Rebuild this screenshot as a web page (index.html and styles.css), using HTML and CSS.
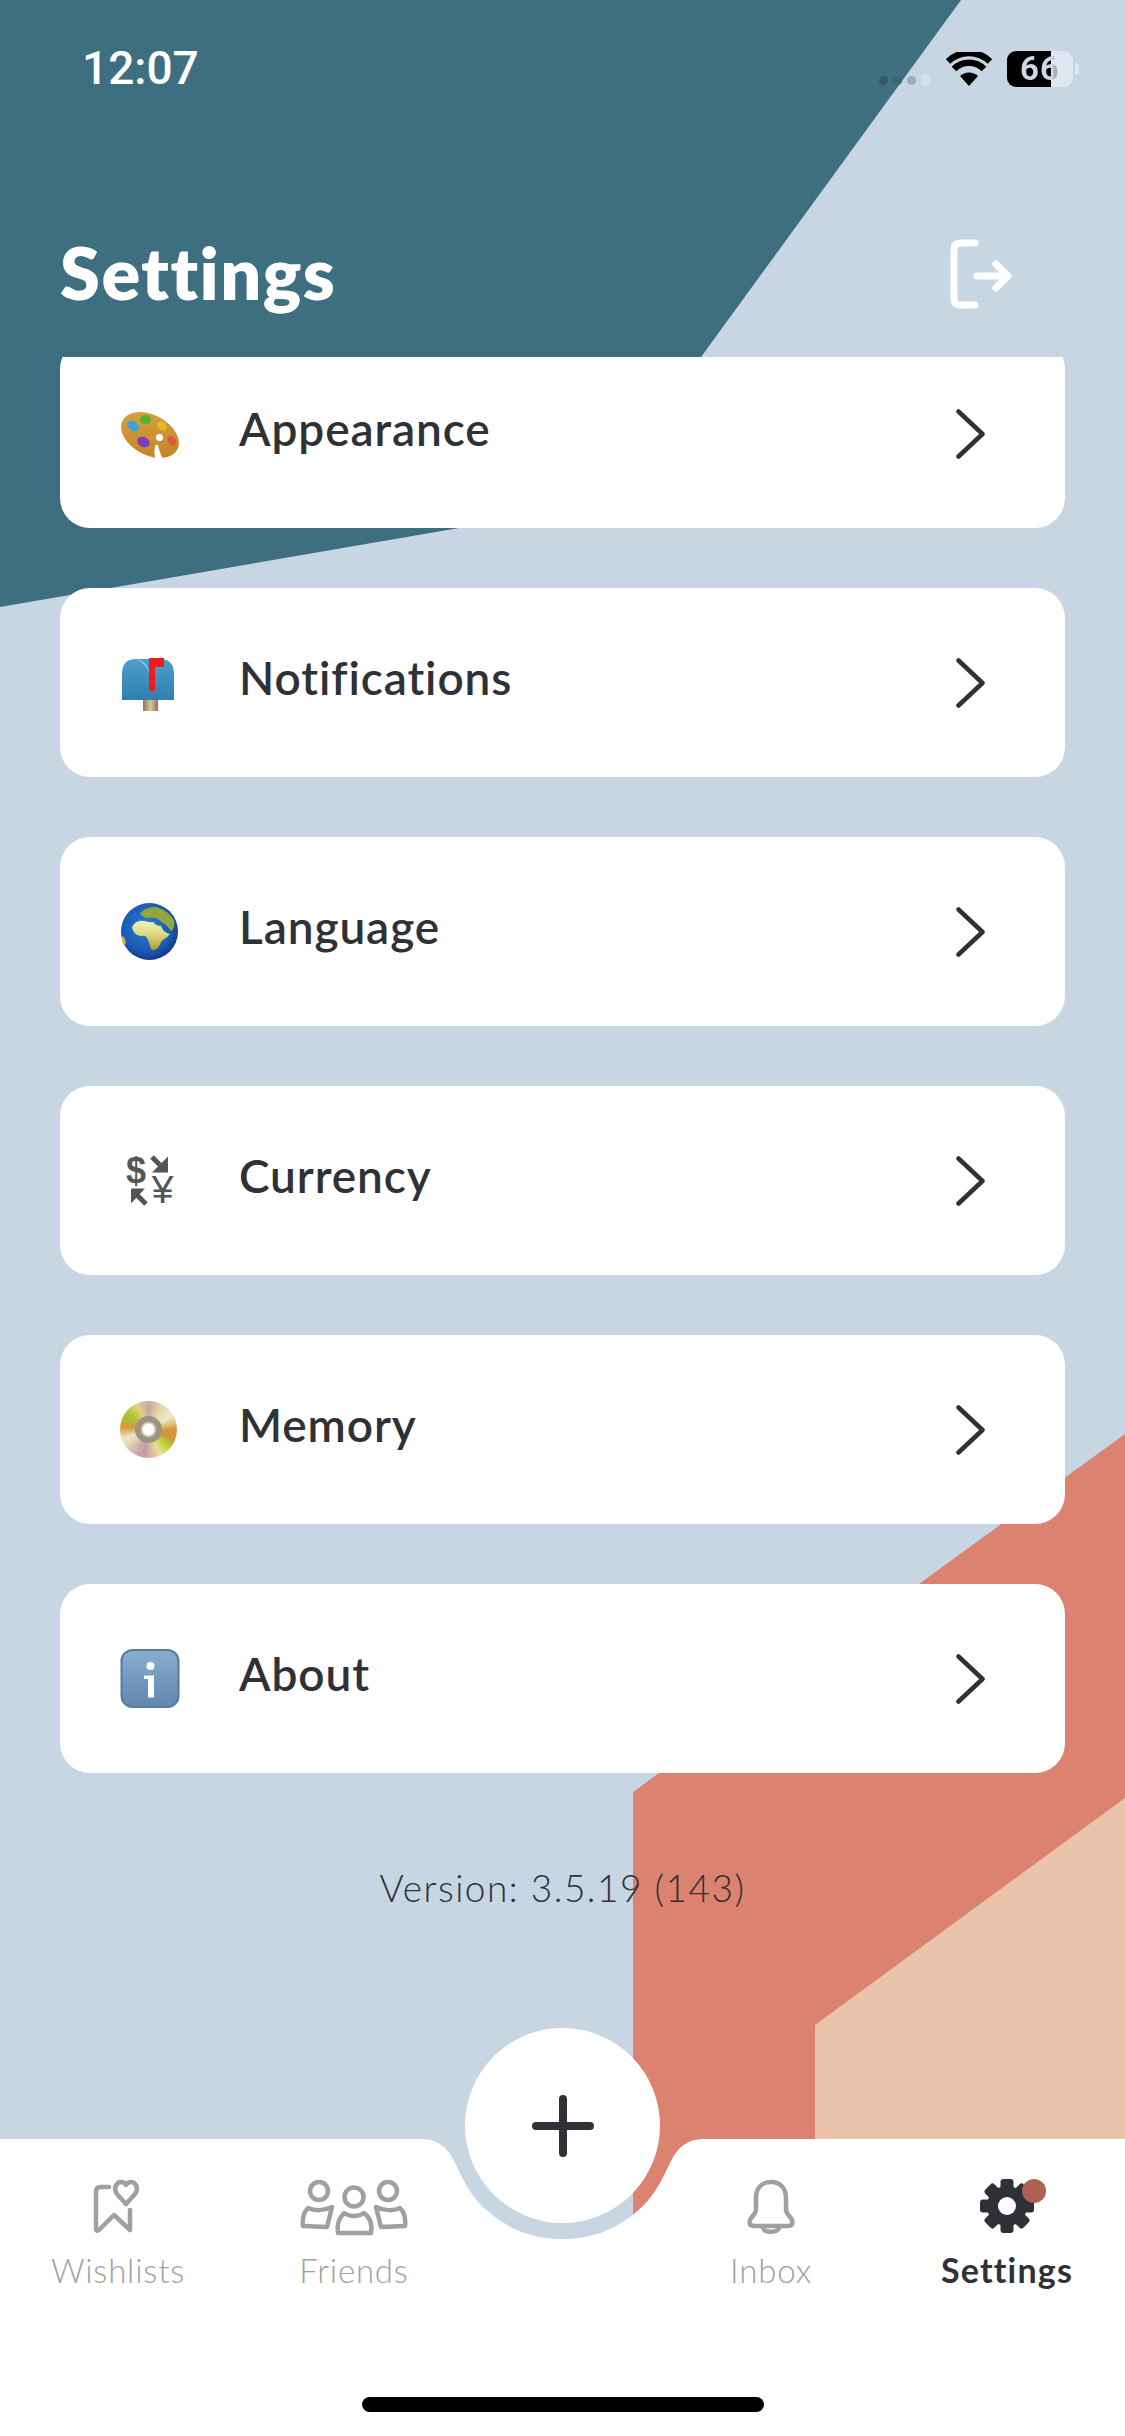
FILE: index.html
```html
<!DOCTYPE html>
<html lang="en">
<head>
<meta charset="utf-8">
<title>Settings</title>
<link rel="stylesheet" href="styles.css">
</head>
<body>
<div class="app">
  <svg class="backdrop" viewBox="0 0 1125 2436" aria-hidden="true">
    <polygon class="shape-teal" points="0,0 961,0 645,434 459,528 0,607"/>
    <polygon class="shape-red" points="1125,1434 633,1792 633,2300 1125,2300"/>
    <polygon class="shape-peach" points="1125,1798 815,2025 815,2300 1125,2300"/>
  </svg>

  <div class="status">
    <span class="time">12:07</span>
    <div class="status-icons">
      <div class="signal"><i></i><i></i><i></i><i></i></div>
      <svg class="wifi" viewBox="0 0 46 34">
        <path class="wifi-dot" d="M23 34 L14 24 A13 13 0 0 1 32 24 Z"/>
        <path class="wifi-arc" d="M8 17 A21 21 0 0 1 38 17"/>
        <path class="wifi-arc" d="M2 9.500 A30 30 0 0 1 44 9.500"/>
      </svg>
      <div class="battery"><span class="battery-level">66</span></div>
      <i class="battery-nub"></i>
    </div>
  </div>

  <header class="header">
    <h1 class="title">Settings</h1>
    <svg class="logout" viewBox="0 0 62 70">
      <path d="M25 4 H11 Q4 4 4 11 V59 Q4 66 11 66 H25"/>
      <path d="M27 37 H58 M46 25 L58 37 L46 49"/>
    </svg>
  </header>

  <main class="scroller">
    <div class="list">
      <a class="row">
        <svg class="emoji" viewBox="0 0 60 60">
          <defs>
            <linearGradient id="wood" x1="0" y1="0" x2="1" y2="1"><stop offset="0" stop-color="#dca53e"/><stop offset="1" stop-color="#bd8028"/></linearGradient>
          </defs>
          <ellipse cx="30" cy="31" rx="31" ry="20" transform="rotate(28 30 31)" fill="url(#wood)"/>
          <path d="M35.500 41 Q33 47 36 58 L44 58 Q39 47 38 41 Z" fill="#fff"/>
          <circle cx="39.500" cy="33.500" r="3.500" fill="#fff"/>
          <ellipse cx="13" cy="22" rx="6.500" ry="4.500" transform="rotate(35 13 22)" fill="#3aa3dc"/>
          <ellipse cx="25.500" cy="15.500" rx="5.500" ry="4.500" fill="#4cb52c"/>
          <ellipse cx="42" cy="22" rx="5.500" ry="4" transform="rotate(35 42 22)" fill="#e3b92a"/>
          <ellipse cx="52" cy="37" rx="5.500" ry="4" transform="rotate(55 52 37)" fill="#e5583c"/>
          <ellipse cx="23.500" cy="38" rx="6.500" ry="5" transform="rotate(25 23.500 38)" fill="#7a3fb8"/>
        </svg>
        <span class="row-label">Appearance</span>
        <svg class="chevron" viewBox="0 0 29 50"><path d="M2.500 2.500 L26.500 25 L2.500 47.500"/></svg>
      </a>
      <a class="row">
        <svg class="emoji" viewBox="0 0 60 60">
          <defs>
            <linearGradient id="box" x1="0" y1="0" x2="0" y2="1"><stop offset="0" stop-color="#4f9fcc"/><stop offset="1" stop-color="#2f7fb0"/></linearGradient>
            <linearGradient id="post" x1="0" y1="0" x2="1" y2="0"><stop offset="0" stop-color="#8f7850"/><stop offset=".5" stop-color="#d8c49a"/><stop offset="1" stop-color="#8f7850"/></linearGradient>
          </defs>
          <rect x="23" y="46" width="15" height="12" fill="url(#post)"/>
          <path d="M2 47 V21 Q2 6 16 6 H40 Q54 6 54 21 V47 Z" fill="url(#box)"/>
          <path d="M16 6 Q28 8 29 20 Q26 11 16 6 Z" fill="#8cc6e4"/>
          <path d="M29 5 H44 V14 H35 V38 H29 Z" fill="#ee1c1c"/>
        </svg>
        <span class="row-label">Notifications</span>
        <svg class="chevron" viewBox="0 0 29 50"><path d="M2.500 2.500 L26.500 25 L2.500 47.500"/></svg>
      </a>
      <a class="row">
        <svg class="emoji" viewBox="0 0 60 60">
          <defs>
            <radialGradient id="sea" cx=".45" cy=".42" r=".62"><stop offset="0" stop-color="#2a7fd8"/><stop offset=".7" stop-color="#1c58b4"/><stop offset="1" stop-color="#12357e"/></radialGradient>
            <linearGradient id="land" x1="0" y1="0" x2="0" y2="1"><stop offset="0" stop-color="#f0f2b8"/><stop offset=".5" stop-color="#d8d878"/><stop offset="1" stop-color="#a89c30"/></linearGradient>
          </defs>
          <circle cx="29.500" cy="29.500" r="28.500" fill="url(#sea)"/>
          <path d="M12 25 C14 21 17 19 20 19 C25 18 28 21 33 20 C36 23 38 24 41 24 C43 29 46 31 50 32 C47 36 43 37 41 40 C40 44 37 48 33 48 C30 48 30 42 28 38 C27 35 25 33 22 34 C17 34 13 31 12 25 Z" fill="url(#land)"/>
          <path d="M20 12 C23 7 29 5 35 5 C42 6 50 11 54 18 C55 22 54 26 52 29 C50 29 49 26 47 24 C44 21 40 19 36 16 C32 15 27 17 24 15 C22 14 21 13 20 12 Z" fill="#93a53f"/>
          <path d="M1.500 34 C4 34 5.500 37 6 41 L4 44 C2.500 41 2 38 1.500 34 Z" fill="#c2b54a"/>
        </svg>
        <span class="row-label">Language</span>
        <svg class="chevron" viewBox="0 0 29 50"><path d="M2.500 2.500 L26.500 25 L2.500 47.500"/></svg>
      </a>
      <a class="row">
        <svg class="emoji" viewBox="0 0 60 60">
          <text class="cur" x="16" y="32" text-anchor="middle">$</text>
          <text class="cur cur-yen" x="42.500" y="51.500" text-anchor="middle">¥</text>
          <path class="cur-head" d="M48 5.500 V21.500 H32 Z M11 37.500 H25 L11 52.500 Z"/>
          <path class="cur-arrow" d="M32 6 L44 18 M26 53 L14 41"/>
        </svg>
        <span class="row-label">Currency</span>
        <svg class="chevron" viewBox="0 0 29 50"><path d="M2.500 2.500 L26.500 25 L2.500 47.500"/></svg>
      </a>
      <a class="row">
        <div class="emoji disc"></div>
        <span class="row-label">Memory</span>
        <svg class="chevron" viewBox="0 0 29 50"><path d="M2.500 2.500 L26.500 25 L2.500 47.500"/></svg>
      </a>
      <a class="row">
        <svg class="emoji" viewBox="0 0 60 60">
          <defs>
            <linearGradient id="info" x1="0" y1="0" x2="0" y2="1"><stop offset="0" stop-color="#88aed0"/><stop offset="1" stop-color="#6088ac"/></linearGradient>
          </defs>
          <rect x="1.500" y="1" width="57" height="57" rx="11" fill="url(#info)" stroke="#587a9c" stroke-width="2"/>
          <circle cx="30.500" cy="17" r="4" fill="#fff"/>
          <path d="M24 26.500 H34 V48.500 H28 V30 H24 Z" fill="#fff"/>
        </svg>
        <span class="row-label">About</span>
        <svg class="chevron" viewBox="0 0 29 50"><path d="M2.500 2.500 L26.500 25 L2.500 47.500"/></svg>
      </a>
      <p class="version">Version: 3.5.19 (143)</p>
    </div>
  </main>

  <nav class="tabbar">
    <svg class="tabbar-bg" viewBox="0 0 1125 297" aria-hidden="true">
      <path d="M0 0 H422 C438 0 447 9 453 20 C461 36 470 59 490 74 C513 93 537 100 562.500 100 C588 100 612 93 635 74 C655 59 664 36 672 20 C678 9 687 0 703 0 H1125 V297 H0 Z"/>
    </svg>
    <button class="fab" aria-label="Add">
      <svg viewBox="0 0 62 62"><path d="M4 31 H58 M31 4 V58"/></svg>
    </button>
    <div class="tabs">
      <a class="tab">
        <svg class="tab-icon" width="60" height="58" viewBox="0 0 60 58">
          <path d="M21 9 H13 Q8 9 8 14 V50 Q8 55 12 51 L26 37 L42 52 V32"/>
          <path d="M38 26 L29 16 C25 11 28 4 33 4 C35.500 4 37 5 38 7 C39 5 40.500 4 43 4 C48 4 51 11 47 16 Z"/>
        </svg>
        <span class="tab-label">Wishlists</span>
      </a>
      <a class="tab">
        <svg class="tab-icon" width="108" height="58" viewBox="0 0 108 58">
          <circle cx="19" cy="13" r="9"/>
          <circle cx="54" cy="19" r="9.500"/>
          <circle cx="88" cy="13" r="9"/>
          <path d="M3 48 C2 40 4 34 8 30 C14 33 24 33 32 29 L27 49 Z"/>
          <path d="M105 48 C106 40 104 34 100 30 C94 33 84 33 76 29 L81 49 Z"/>
          <path d="M38 55 C36 44 41 38 44 35 C50 39 58 39 64 35 C68 38 73 44 71 55 Z"/>
        </svg>
        <span class="tab-label">Friends</span>
      </a>
      <div class="tab-gap"></div>
      <a class="tab">
        <svg class="tab-icon" width="48" height="58" viewBox="0 0 48 58">
          <path d="M24 4 C14 4 9 11 9 20 V31 C9 38 3 38 2.500 44 C2.500 47 4 48 7 48 H41 C44 48 45.500 47 45.500 44 C45 38 39 38 39 31 V20 C39 11 34 4 24 4 Z"/>
          <path d="M16 50 C18 55 30 55 32 50"/>
        </svg>
        <span class="tab-label">Inbox</span>
      </a>
      <a class="tab tab-active">
        <svg class="tab-icon gear" width="80" height="58" viewBox="0 0 80 58">
          <g transform="translate(40 28)">
            <rect x="-6.500" y="-27" width="13" height="54" rx="3"/>
            <rect x="-6.500" y="-27" width="13" height="54" rx="3" transform="rotate(45)"/>
            <rect x="-6.500" y="-27" width="13" height="54" rx="3" transform="rotate(90)"/>
            <rect x="-6.500" y="-27" width="13" height="54" rx="3" transform="rotate(135)"/>
            <circle r="20"/>
            <circle class="gear-hole" r="9"/>
          </g>
          <circle class="gear-dot" cx="67" cy="13" r="12"/>
        </svg>
        <span class="tab-label">Settings</span>
      </a>
    </div>
    <div class="home-indicator"></div>
  </nav>
</div>
</body>
</html>
```
FILE: styles.css
```css
* { box-sizing: border-box; }
html, body { margin: 0; padding: 0; }
body { font-family: "Lato", "Liberation Sans", sans-serif; color: #2f3136; }

.app {
  position: relative;
  width: 1125px;
  height: 2436px;
  overflow: hidden;
  display: flex;
  flex-direction: column;
  background: #c7d6e2;
}
.backdrop { position: absolute; inset: 0; width: 1125px; height: 2436px; }
.shape-teal { fill: #3e6f80; }
.shape-red { fill: #db8270; }
.shape-peach { fill: #e9c4aa; }

.status {
  position: relative;
  flex: none;
  height: 120px;
  padding: 40px 46px 0 82px;
  display: flex;
  justify-content: space-between;
  align-items: flex-start;
}
.time {
  font-family: "Roboto", sans-serif;
  font-size: 46px;
  font-weight: 500;
  line-height: 56px;
  color: #fff;
}
.status-icons { display: flex; align-items: flex-start; padding-top: 11px; }
.signal { display: flex; gap: 5px; margin-top: 25px; margin-right: 16px; }
.signal i { width: 9px; height: 9px; border-radius: 50%; background: #2f5a6b; }
.signal i:nth-child(2) { background: #3c6678; }
.signal i:nth-child(3) { background: #98adbb; }
.signal i:nth-child(4) { background: #d6dee6; border-radius: 3px; height: 12px; margin-top: -2px; }
.wifi { width: 46px; height: 34px; margin-right: 15px; margin-top: 1px; }
.wifi-dot { fill: #000; }
.wifi-arc { fill: none; stroke: #000; stroke-width: 6.500px; }
.battery {
  width: 66px;
  height: 36px;
  border-radius: 9px;
  background: linear-gradient(90deg, #000 0 44px, #dfe8f0 44px);
  display: flex;
  justify-content: center;
  align-items: center;
}
.battery-level {
  font-family: "Roboto", sans-serif;
  font-size: 33px;
  font-weight: 700;
  letter-spacing: 1px;
  line-height: 36px;
  background: linear-gradient(90deg, #ccd9e4 0 33px, #a9b6c2 33px);
  -webkit-background-clip: text;
  background-clip: text;
  color: transparent;
}
.battery-nub {
  width: 4px;
  height: 12px;
  margin-top: 12px;
  margin-left: 2px;
  border-radius: 0 4px 4px 0;
  background: #dfe8f0;
}

.header {
  position: relative;
  flex: none;
  height: 237px;
  padding: 116px 113px 0 60px;
  display: flex;
  justify-content: space-between;
  align-items: flex-start;
}
.title { margin: 0; font-size: 72px; font-weight: 800; letter-spacing: 1.500px; line-height: 72px; color: #fff; }
.logout { width: 62px; height: 70px; margin-top: 3px; fill: none; stroke: #fff; stroke-width: 7px; stroke-linecap: round; stroke-linejoin: round; }

.scroller { position: relative; flex: 1; overflow: hidden; }
.list { display: flex; flex-direction: column; gap: 60px; margin-top: -18px; padding: 0 60px; }
.row {
  height: 189px;
  flex: none;
  display: flex;
  align-items: center;
  padding: 0 80px 0 60px;
  border-radius: 30px;
  background: #fff;
}
.emoji { flex: none; width: 60px; height: 60px; }
.row-label { flex: 1; margin: 0 0 9px 59px; font-size: 46px; font-weight: 600; letter-spacing: .9px; line-height: 56px; color: #2f3136; }
.chevron { flex: none; width: 29px; height: 50px; fill: none; stroke: #2f3136; stroke-width: 4.500px; stroke-linecap: round; stroke-linejoin: round; }
.cur { font-family: "Liberation Sans", sans-serif; font-size: 36px; font-weight: 700; fill: #555; }
.cur-yen { font-size: 39px; font-weight: 400; }
.cur-head { fill: #555; }
.cur-arrow { fill: none; stroke: #555; stroke-width: 5px; }
.disc {
  width: 57px;
  height: 57px;
  margin-right: 3px;
  border-radius: 50%;
  background:
    radial-gradient(circle, #fff 0 5.500px, #d8d0b8 6px 7px, #9c9480 8px 13px, transparent 14px),
    conic-gradient(from 0deg, #c8a8a8 0deg, #e8d8a8 30deg, #f0e8c8 60deg, #d8983c 90deg, #c89838 110deg, #b8d038 130deg, #e8e098 155deg, #c898a8 190deg, #c8a8b0 205deg, #e8d8b0 235deg, #f0e8c8 250deg, #d8983c 275deg, #a8c838 310deg, #e8d080 335deg, #c8a8a8 360deg);
}
.version {
  margin: 30px 0 0;
  text-align: center;
  font-size: 37px;
  font-weight: 300;
  line-height: 50px;
  color: #2f3136;
  letter-spacing: 1.500px;
}

.tabbar {
  position: relative;
  flex: none;
  height: 297px;
  display: flex;
  flex-direction: column;
  align-items: center;
}
.tabbar-bg { position: absolute; inset: 0; width: 1125px; height: 297px; fill: #fff; }
.fab {
  position: absolute;
  left: 465px;
  top: -111px;
  width: 195px;
  height: 195px;
  padding: 0;
  border: 0;
  border-radius: 50%;
  background: #fff;
  display: flex;
  align-items: center;
  justify-content: center;
}
.fab svg { width: 62px; height: 62px; fill: none; stroke: #2f3136; stroke-width: 8px; stroke-linecap: round; }
.tabs { position: relative; width: 100%; display: flex; padding-top: 39px; }
.tab { flex: none; width: 236px; display: flex; flex-direction: column; align-items: center; }
.tab-gap { flex: none; width: 181px; }
.tab-icon { fill: none; stroke: #a0a0a0; stroke-width: 4.500px; stroke-linecap: round; stroke-linejoin: round; display: block; }
.gear { stroke: none; fill: #2f3136; }
.gear-hole { fill: #fff; }
.gear-dot { fill: #b06050; }
.tab-label { margin-top: 12px; font-size: 33px; font-weight: 300; letter-spacing: .8px; line-height: 44px; color: #a0a0a0; }
.tab-active .tab-label { font-size: 34px; font-weight: 700; letter-spacing: 1.200px; color: #2f3136; }
.home-indicator { position: relative; margin-top: auto; margin-bottom: 24px; width: 402px; height: 15px; border-radius: 8px; background: #000; }
```
